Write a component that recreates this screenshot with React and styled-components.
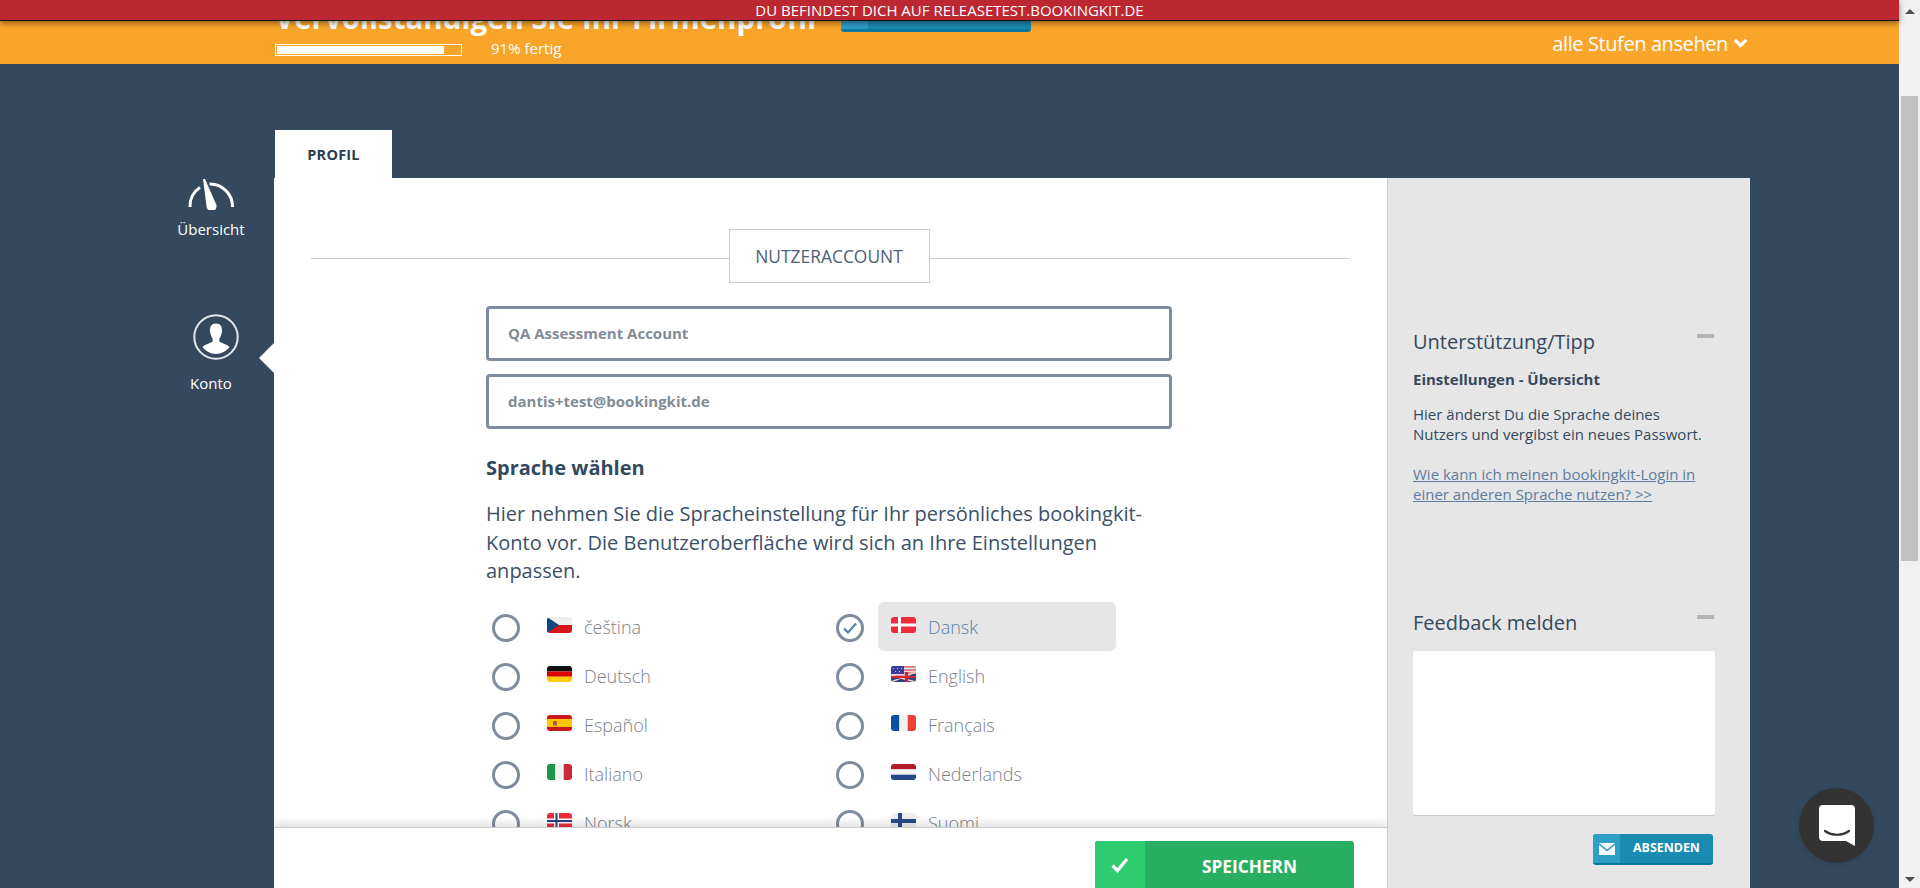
import React from 'react';
import styled, { createGlobalStyle } from 'styled-components';

const GlobalStyle = createGlobalStyle`
  html, body {
    margin: 0;
    height: 100%;
    overflow: hidden;
    font-family: "Open Sans", "Liberation Sans", sans-serif;
  }
`;

const Screen = styled.div`
  position: relative;
  display: flex;
  width: 1920px;
  height: 888px;
  overflow: hidden;
  background: #34495e;
`;

const Page = styled.div`
  flex: 1;
  min-width: 0;
  overflow: hidden;
`;

const Banner = styled.div`
  position: absolute;
  top: 0;
  left: 0;
  right: 21px;
  height: 20px;
  background: #bc2732;
  border-bottom: 1px solid #111;
  box-shadow: 0 2px 6px rgba(0, 0, 0, 0.45);
  color: #fff;
  font-size: 15px;
  line-height: 20px;
  text-align: center;
  z-index: 5;
`;

const ProfileBar = styled.div`
  display: flex;
  justify-content: space-between;
  height: 64px;
  padding-left: 275px;
  padding-right: 151px;
  background: #f9a529;
  color: #fff;
  overflow: hidden;
`;

const ProfileLeft = styled.div`
  display: flex;
  flex-direction: column;
`;

const HeadingRow = styled.div`
  display: flex;
  align-items: flex-end;
  height: 33px;
  gap: 25px;
`;

const Heading = styled.h1`
  margin: 0 0 -5px;
  font-size: 29.5px;
  font-weight: 700;
  line-height: 41px;
  white-space: nowrap;
`;

const HeadingButton = styled.div`
  width: 190px;
  height: 14px;
  margin-bottom: 1px;
  border-radius: 0 0 3px 3px;
  background: linear-gradient(to right, #2d9fc9 0, #2d9fc9 27px, #1a8cb2 27px);
  border-bottom: 3px solid #0b7a9e;
`;

const ProgressRow = styled.div`
  display: flex;
  align-items: center;
  gap: 29px;
  margin-top: 9px;
  font-size: 15px;
  line-height: 12px;
`;

const ProgressTrack = styled.div`
  width: 183px;
  height: 8px;
  padding: 1px;
  border: 1px solid #fff;
`;

const ProgressFill = styled.div`
  height: 100%;
  background: #fff;
`;

const ProgressLabel = styled.span`
  margin-bottom: 4px;
`;

const StepsLink = styled.div`
  display: flex;
  align-items: center;
  gap: 5px;
  margin-top: 32px;
  height: 22px;
  font-size: 20px;
  font-weight: 400;
  letter-spacing: -0.4px;
  white-space: nowrap;
`;

const Body = styled.div`
  display: flex;
  padding-top: 66px;
`;

const Nav = styled.nav`
  width: 274px;
  padding-left: 148px;
  padding-top: 48px;
  box-sizing: border-box;
  flex-shrink: 0;
`;

const NavItem = styled.div`
  position: relative;
  display: flex;
  flex-direction: column;
  align-items: center;
  height: ${p => p.$height}px;
  color: #fff;
  font-size: 15px;
  line-height: 20px;
`;

const NavIcon = styled.div`
  height: ${p => p.$height}px;
  margin: ${p => p.$margin};
`;

const Notch = styled.span`
  position: absolute;
  right: 0;
  top: 30px;
  width: 0;
  height: 0;
  border-top: 15px solid transparent;
  border-bottom: 15px solid transparent;
  border-right: 15px solid #fff;
`;

const Workspace = styled.div`
  width: 1476px;
  flex-shrink: 0;
`;

const Tab = styled.div`
  width: 117px;
  height: 48px;
  margin-left: 1px;
  background: #fff;
  color: #2c3e50;
  font-size: 14.5px;
  font-weight: 700;
  line-height: 50px;
  text-align: center;
  letter-spacing: 0.2px;
`;

const Panel = styled.div`
  display: flex;
  height: 710px;
`;

const MainColumn = styled.div`
  position: relative;
  width: 1114px;
  height: 710px;
  background: #fff;
  overflow: hidden;
  border-right: 1px solid #ccc;
  box-sizing: border-box;
`;

const Legend = styled.div`
  position: relative;
  display: flex;
  justify-content: center;
  margin: 51px 37px 0 37px;
  padding-right: 3px;

  &::before {
    content: '';
    position: absolute;
    left: 0;
    right: 1px;
    top: 29px;
    height: 1px;
    background: #ccc;
  }
`;

const LegendBox = styled.div`
  position: relative;
  width: 201px;
  height: 54px;
  box-sizing: border-box;
  border: 1px solid #ccc;
  background: #fff;
  color: #4d6075;
  font-size: 17.4px;
  line-height: 52px;
  text-align: center;
`;

const Form = styled.div`
  width: 686px;
  margin: 23px 0 0 212px;
`;

const Field = styled.div`
  box-sizing: border-box;
  height: 55px;
  margin-bottom: 13px;
  padding-left: 19px;
  border: 3px solid #7f8c9d;
  border-radius: 4px;
  color: #838b95;
  font-size: 15px;
  font-weight: 700;
  line-height: 49px;
`;

const SectionTitle = styled.h2`
  margin: 26px 0 0;
  color: #34495e;
  font-size: 20px;
  font-weight: 700;
  line-height: 25px;
`;

const Intro = styled.p`
  margin: 20px 0 0;
  color: #3c5068;
  font-size: 20px;
  line-height: 28.5px;
`;

const Languages = styled.div`
  display: grid;
  grid-template-columns: 344px 1fr;
  grid-auto-rows: 49px;
  margin-top: 17px;
`;

const Language = styled.div`
  display: flex;
  align-items: center;
  padding-left: 6px;
`;

const Radio = styled.span`
  display: flex;
  align-items: center;
  justify-content: center;
  width: 28px;
  height: 28px;
  box-sizing: border-box;
  border: 3px solid #7f8c9d;
  border-radius: 50%;
  flex-shrink: 0;
  margin-top: 2px;
`;

const LanguageLabel = styled.div`
  display: flex;
  align-items: center;
  width: 238px;
  height: 49px;
  box-sizing: border-box;
  margin-left: 14px;
  padding-left: 13px;
  margin-top: -1px;
  border-radius: 6px;
  background: ${p => (p.$selected ? '#e6e6e6' : 'transparent')};
  color: ${p => (p.$selected ? '#5d7da5' : '#7d8186')};
  font-size: 18px;
  font-weight: 300;
`;

const FlagBox = styled.span`
  display: block;
  width: 25px;
  height: 16px;
  margin-right: 12px;
  margin-top: -3px;
  border-radius: 3px;
  overflow: hidden;
  flex-shrink: 0;

  svg {
    display: block;
  }
`;

const SaveBar = styled.div`
  position: absolute;
  left: 0;
  right: 0;
  bottom: 0;
  height: 60px;
  background: #fff;
  border-top: 1px solid #ccc;
  box-shadow: 0 -4px 8px rgba(0, 0, 0, 0.12);
`;

const SaveButton = styled.div`
  position: absolute;
  left: 821px;
  top: 13px;
  display: flex;
  width: 259px;
  height: 52px;
  border-radius: 3px 3px 0 0;
  background: #27ae60;
  overflow: hidden;
  color: #fff;
  font-size: 17.3px;
  font-weight: 700;
  line-height: 52px;
`;

const SaveIcon = styled.span`
  display: flex;
  align-items: center;
  justify-content: center;
  width: 50px;
  height: 100%;
  padding-bottom: 4px;
  box-sizing: border-box;
  background: #2ecc71;
`;

const SaveText = styled.span`
  flex: 1;
  text-align: center;
`;

const SideColumn = styled.aside`
  width: 362px;
  height: 710px;
  box-sizing: border-box;
  padding: 150px 34px 0 25px;
  background: #e6e6e6;
  color: #34495e;
`;

const SideBlock = styled.div`
  position: relative;
  height: ${p => p.$height}px;
`;

const SideTitle = styled.h3`
  margin: 0;
  font-size: 20px;
  font-weight: 400;
  line-height: 28px;
`;

const Collapse = styled.span`
  position: absolute;
  right: 2px;
  top: 6px;
  width: 17px;
  height: 4px;
  background: #b5b5b5;
`;

const SideStrong = styled.div`
  margin-top: 13px;
  font-size: 15px;
  font-weight: 700;
  line-height: 20px;
`;

const SideText = styled.p`
  margin: 15px 0 0;
  color: #34495e;
  font-size: 15px;
  line-height: 20px;
`;

const SideLink = styled.a`
  display: block;
  margin-top: 20px;
  color: #5e7ba1;
  font-size: 15px;
  line-height: 20px;
  text-decoration: underline;
`;

const FeedbackBox = styled.div`
  width: 302px;
  height: 164px;
  margin-top: 14px;
  background: #fff;
  border-radius: 2px;
  box-shadow: 0 1px 1px rgba(0, 0, 0, 0.15);
`;

const SendRow = styled.div`
  display: flex;
  justify-content: flex-end;
  width: 300px;
  margin-top: 19px;
`;

const SendButton = styled.div`
  display: flex;
  width: 120px;
  height: 31px;
  box-sizing: border-box;
  border-bottom: 2px solid #0b7a9e;
  border-radius: 3px;
  background: #1a8cb2;
  overflow: hidden;
  color: #fff;
  font-size: 12.4px;
  font-weight: 700;
  line-height: 28px;
`;

const SendIcon = styled.span`
  display: flex;
  align-items: center;
  justify-content: center;
  width: 27px;
  background: #2d9fc9;
`;

const SendText = styled.span`
  flex: 1;
  text-align: center;
`;

const ChatBubble = styled.div`
  position: absolute;
  left: 1799px;
  top: 788px;
  display: flex;
  align-items: center;
  justify-content: center;
  width: 75px;
  height: 75px;
  border-radius: 50%;
  background: #333;
  box-shadow: 0 1px 6px rgba(0, 0, 0, 0.1);
  z-index: 6;
`;

const Scrollbar = styled.div`
  display: flex;
  flex-direction: column;
  align-items: center;
  width: 21px;
  height: 888px;
  background: #f1f1f1;
  flex-shrink: 0;
`;

const ScrollArrow = styled.span`
  width: 0;
  height: 0;
  margin: ${p => p.$margin};
  border-left: 5px solid transparent;
  border-right: 5px solid transparent;
  border-bottom: ${p => (p.$down ? 'none' : '5px solid #505050')};
  border-top: ${p => (p.$down ? '5px solid #505050' : 'none')};
`;

const ScrollThumb = styled.div`
  width: 17px;
  height: 465px;
  margin-top: 82px;
  background: #c1c1c1;
`;

const Flag = ({ children }) => (
  <FlagBox>
    <svg width="25" height="16" viewBox="0 0 25 16">
      {children}
    </svg>
  </FlagBox>
);

const flags = {
  cs: (
    <>
      <rect width="25" height="8" fill="#eeeeee" />
      <rect y="8" width="25" height="8" fill="#d7141a" />
      <path d="M0 0 L12 8 L0 16 Z" fill="#11457e" />
    </>
  ),
  da: (
    <>
      <rect width="25" height="16" fill="#f02c3c" />
      <rect x="7" width="3" height="16" fill="#fff" />
      <rect y="6.5" width="25" height="3" fill="#fff" />
    </>
  ),
  de: (
    <>
      <rect width="25" height="5.4" fill="#111" />
      <rect y="5.4" width="25" height="5.3" fill="#dd0000" />
      <rect y="10.7" width="25" height="5.3" fill="#ffce00" />
    </>
  ),
  en: (
    <>
      <rect width="25" height="16" fill="#2a3f86" />
      <path d="M13 0H25V1.5H13ZM13 3.5H25V5H13ZM13 6.5H25V8H13Z" fill="#f0736f" />
      <path d="M13 1.5H25V3.5H13ZM13 5H25V6.5H13Z" fill="#f7dcdc" />
      <path d="M0 8H13V9H0ZM0 16L25 6M0 9.5L25 16" stroke="#f7c9c9" strokeWidth="1.6" />
      <rect width="13" height="8" fill="#3c3b9e" />
      <path d="M2 2h1v1H2zM6 2h1v1H6zM10 2h1v1h-1zM4 5h1v1H4zM8 5h1v1H8z" fill="#b9b9ee" />
      <rect x="14" y="6" width="3" height="10" fill="#d8242f" />
      <rect y="10" width="25" height="2" fill="#d8242f" />
    </>
  ),
  es: (
    <>
      <rect width="25" height="16" fill="#c8161d" />
      <rect y="4" width="25" height="8" fill="#ffc400" />
      <rect x="6" y="6" width="4" height="4.5" rx="1" fill="#b5562a" />
    </>
  ),
  fr: (
    <>
      <rect width="8.4" height="16" fill="#0a50a1" />
      <rect x="8.4" width="8.3" height="16" fill="#f1f1f1" />
      <rect x="16.7" width="8.3" height="16" fill="#ef4135" />
    </>
  ),
  it: (
    <>
      <rect width="8.4" height="16" fill="#1a9550" />
      <rect x="8.4" width="8.3" height="16" fill="#f1f1f1" />
      <rect x="16.7" width="8.3" height="16" fill="#c92a37" />
    </>
  ),
  nl: (
    <>
      <rect width="25" height="5.4" fill="#ae1c28" />
      <rect y="5.4" width="25" height="5.3" fill="#f1f1f1" />
      <rect y="10.7" width="25" height="5.3" fill="#21468b" />
    </>
  ),
  no: (
    <>
      <rect width="25" height="16" fill="#ef2b3c" />
      <rect x="7" width="5" height="16" fill="#fff" />
      <rect y="5.5" width="25" height="5" fill="#fff" />
      <rect x="8.5" width="2" height="16" fill="#2a3f86" />
      <rect y="7" width="25" height="2" fill="#2a3f86" />
    </>
  ),
  fi: (
    <>
      <rect width="25" height="16" fill="#eeeeee" />
      <rect x="7" width="4" height="16" fill="#2a4a8a" />
      <rect y="6" width="25" height="4" fill="#2a4a8a" />
    </>
  )
};

const languages = [
  { code: 'cs', label: 'čeština' },
  { code: 'da', label: 'Dansk', selected: true },
  { code: 'de', label: 'Deutsch' },
  { code: 'en', label: 'English' },
  { code: 'es', label: 'Español' },
  { code: 'fr', label: 'Français' },
  { code: 'it', label: 'Italiano' },
  { code: 'nl', label: 'Nederlands' },
  { code: 'no', label: 'Norsk' },
  { code: 'fi', label: 'Suomi' }
];

const GaugeIcon = () => (
  <svg width="50" height="32" viewBox="0 0 50 32" fill="none">
    <path d="M4 29 A21.5 21.5 0 0 1 14 9.5" stroke="#fff" strokeWidth="3" />
    <path d="M23.5 6 A22.5 22.5 0 0 1 46.5 29" stroke="#fff" strokeWidth="3" />
    <path d="M17 1 L19 1 L30 26 A5 5 0 1 1 20.5 28 Z" fill="#fff" />
  </svg>
);

const AvatarIcon = () => (
  <svg width="46" height="46" viewBox="0 0 46 46" fill="none">
    <circle cx="23" cy="23" r="21.7" stroke="#e4e7ea" strokeWidth="2" />
    <path
      d="M23 9.5 C18.5 9.5 16.6 13 17 17 C17.3 20 18.4 23 19.6 24.8 L19.6 27.5 C17 29.5 11.5 30.5 9.5 33 C12.5 37 17.5 40 23 40 C28.5 40 33.5 37 36.5 33 C34.5 30.5 29 29.5 26.4 27.5 L26.4 24.8 C27.6 23 28.7 20 29 17 C29.4 13 27.5 9.5 23 9.5 Z"
      fill="#fff"
    />
  </svg>
);

const CheckMark = () => (
  <svg width="16" height="14" viewBox="0 0 16 14" fill="none">
    <path d="M2 7.5 L6 11.5 L14 2.5" stroke="#5d7da5" strokeWidth="2.2" />
  </svg>
);

const ChatIcon = () => (
  <svg width="36" height="41" viewBox="0 0 36 41">
    <path
      d="M4 0 H32 A4 4 0 0 1 36 4 V41 L27 36 H4 A4 4 0 0 1 0 32 V4 A4 4 0 0 1 4 0 Z"
      fill="#fff"
    />
    <path
      d="M6 26 C13 31 23 31 30 26"
      fill="none"
      stroke="#333"
      strokeWidth="2.2"
      strokeLinecap="round"
    />
  </svg>
);

const Chevron = () => (
  <svg width="15" height="10" viewBox="0 0 15 10" fill="none">
    <path d="M1.8 1.8 L7.5 7.5 L13.2 1.8" stroke="#fff" strokeWidth="3.2" />
  </svg>
);

function LanguageOption({ code, label, selected }) {
  return (
    <Language>
      <Radio>{selected && <CheckMark />}</Radio>
      <LanguageLabel $selected={selected}>
        <Flag>{flags[code]}</Flag>
        {label}
      </LanguageLabel>
    </Language>
  );
}

export default function App() {
  return (
    <Screen>
      <GlobalStyle />
      <Banner>DU BEFINDEST DICH AUF RELEASETEST.BOOKINGKIT.DE</Banner>
      <Page>
        <ProfileBar>
          <ProfileLeft>
            <HeadingRow>
              <Heading>Vervollständigen Sie Ihr Firmenprofil</Heading>
              <HeadingButton />
            </HeadingRow>
            <ProgressRow>
              <ProgressTrack>
                <ProgressFill style={{ width: '91%' }} />
              </ProgressTrack>
              <ProgressLabel>91% fertig</ProgressLabel>
            </ProgressRow>
          </ProfileLeft>
          <StepsLink>
            alle Stufen ansehen
            <Chevron />
          </StepsLink>
        </ProfileBar>
        <Body>
          <Nav>
            <NavItem $height={135}>
              <NavIcon $height={32} $margin="0 0 9px">
                <GaugeIcon />
              </NavIcon>
              Übersicht
            </NavItem>
            <NavItem $height={100}>
              <NavIcon $height={46} $margin="1px 0 13px 10px">
                <AvatarIcon />
              </NavIcon>
              Konto
              <Notch />
            </NavItem>
          </Nav>
          <Workspace>
            <Tab>PROFIL</Tab>
            <Panel>
              <MainColumn>
                <Legend>
                  <LegendBox>NUTZERACCOUNT</LegendBox>
                </Legend>
                <Form>
                  <Field>QA Assessment Account</Field>
                  <Field>dantis+test@bookingkit.de</Field>
                  <SectionTitle>Sprache wählen</SectionTitle>
                  <Intro>
                    Hier nehmen Sie die Spracheinstellung für Ihr persönliches
                    bookingkit-Konto vor. Die Benutzeroberfläche wird sich an
                    Ihre Einstellungen anpassen.
                  </Intro>
                  <Languages>
                    {languages.map(language => (
                      <LanguageOption key={language.code} {...language} />
                    ))}
                  </Languages>
                </Form>
                <SaveBar>
                  <SaveButton>
                    <SaveIcon>
                      <svg width="18" height="16" viewBox="0 0 18 16" fill="none">
                        <path d="M1.5 8.5 L6.5 13.5 L16 2" stroke="#fff" strokeWidth="3.2" />
                      </svg>
                    </SaveIcon>
                    <SaveText>SPEICHERN</SaveText>
                  </SaveButton>
                </SaveBar>
              </MainColumn>
              <SideColumn>
                <SideBlock $height={281}>
                  <SideTitle>Unterstützung/Tipp</SideTitle>
                  <Collapse />
                  <SideStrong>Einstellungen - Übersicht</SideStrong>
                  <SideText>
                    Hier änderst Du die Sprache deines
                    <br />
                    Nutzers und vergibst ein neues Passwort.
                  </SideText>
                  <SideLink>
                    Wie kann ich meinen bookingkit-Login in
                    <br />
                    einer anderen Sprache nutzen? &gt;&gt;
                  </SideLink>
                </SideBlock>
                <SideBlock $height={250}>
                  <SideTitle>Feedback melden</SideTitle>
                  <Collapse />
                  <FeedbackBox />
                  <SendRow>
                    <SendButton>
                      <SendIcon>
                        <svg width="16" height="12" viewBox="0 0 16 12">
                          <path d="M0 0 H16 L8 6.5 Z" fill="#fff" />
                          <path d="M0 2 L8 8.5 L16 2 V12 H0 Z" fill="#fff" />
                        </svg>
                      </SendIcon>
                      <SendText>ABSENDEN</SendText>
                    </SendButton>
                  </SendRow>
                </SideBlock>
              </SideColumn>
            </Panel>
          </Workspace>
        </Body>
      </Page>
      <Scrollbar>
        <ScrollArrow $margin="9px 0 0" />
        <ScrollThumb />
        <ScrollArrow $down $margin="auto 0 6px" />
      </Scrollbar>
      <ChatBubble>
        <ChatIcon />
      </ChatBubble>
    </Screen>
  );
}
